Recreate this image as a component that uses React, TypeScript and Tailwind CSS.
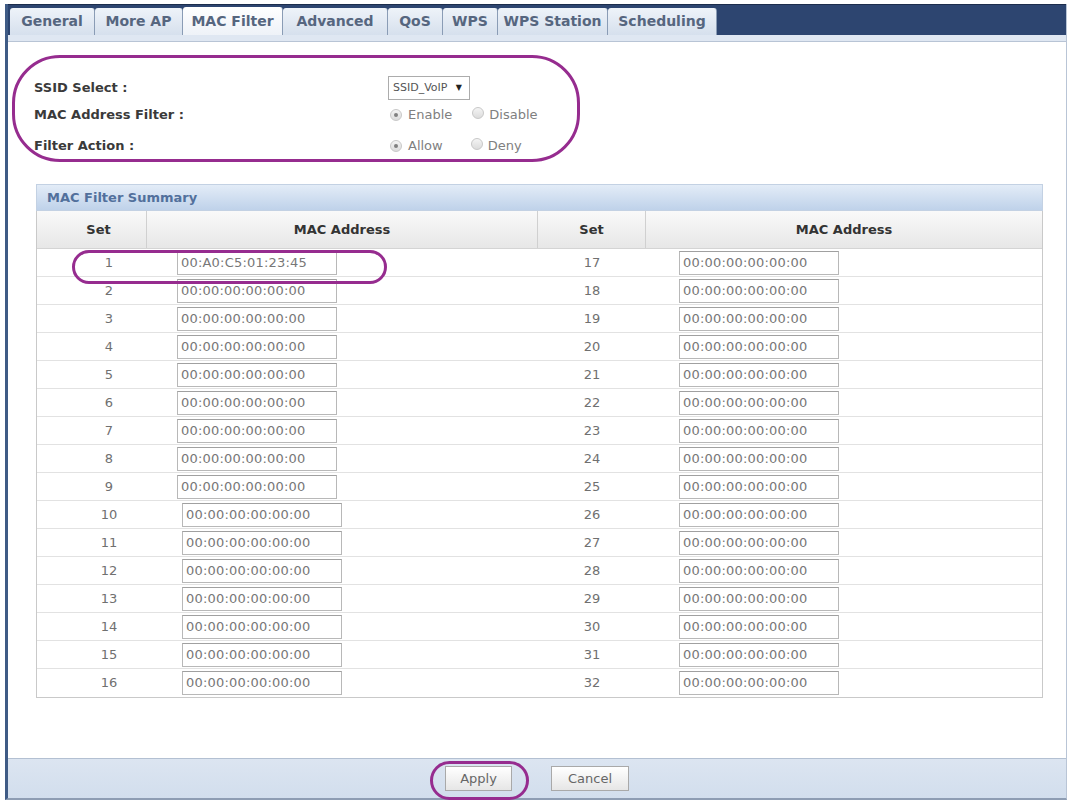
import React from "react";

const tabs = [
  { label: "General", w: 85 },
  { label: "More AP", w: 88 },
  { label: "MAC Filter", w: 100, active: true },
  { label: "Advanced", w: 105 },
  { label: "QoS", w: 55 },
  { label: "WPS", w: 55 },
  { label: "WPS Station", w: 110 },
  { label: "Scheduling", w: 109 },
];

function Radio({ checked }: { checked?: boolean }) {
  return (
    <span className="inline-flex w-[12px] h-[12px] rounded-full border border-[#c8c8c8] bg-gradient-to-b from-[#f4f4f4] to-[#dcdcdc] items-center justify-center">
      {checked && <span className="w-[4px] h-[4px] rounded-full bg-[#808080]" />}
    </span>
  );
}

function MacInput({ value }: { value: string }) {
  return (
    <div className="w-[160px] h-[24px] border border-[#b8b8b8] border-t-[#a0a0a0] bg-white flex items-center pl-[3px] text-[13px] tracking-[0.2px] text-[#777]">
      {value}
    </div>
  );
}

export default function App() {
  const rows = Array.from({ length: 16 }, (_, i) => i + 1);
  return (
    <div
      className="relative w-[1070px] h-[803px] bg-white pt-[4px] pl-[5px] pr-[3px] pb-[3px] overflow-hidden"
      style={{ fontFamily: '"DejaVu Sans", "Liberation Sans", sans-serif' }}
    >
      <div className="h-full flex flex-col border-l-[3px] border-l-[#3f5b85] border-r border-r-[#b9c5d6] border-b-2 border-b-[#8e9db3]">
        {/* tab bar */}
        <div className="h-[31px] shrink-0 bg-[#2d4570] border-t border-t-[#1c2d4c] flex items-end pl-[2px]">
          {tabs.map((t) => (
            <div
              key={t.label}
              style={{ width: t.w }}
              className={
                t.active
                  ? "h-[28px] rounded-t-[3px] border-r border-r-[#8a9cb5] bg-gradient-to-b from-[#ffffff] to-[#eef2f8] flex items-center justify-center text-[14px] font-bold text-[#56667f]"
                  : "h-[27px] rounded-t-[3px] border-r border-r-[#8a9cb5] bg-gradient-to-b from-[#eef3f9] to-[#d6e0ed] flex items-center justify-center text-[14px] font-bold text-[#56667f]"
              }
            >
              {t.label}
            </div>
          ))}
        </div>
        <div className="h-[7px] shrink-0 bg-[#dfe7f2] border-b border-b-[#b8c4d5]" />

        {/* content */}
        <div className="flex-1 flex flex-col">
          <div className="pt-[34px] pl-[26px] text-[13px]">
            <div className="h-[24px] flex items-center">
              <div className="w-[354px] font-bold text-[#3a3a3a]">SSID Select :</div>
              <div className="w-[82px] h-[24px] border border-[#acacac] bg-white flex items-center justify-between pl-[4px] pr-[7px] text-[11px] text-[#555]">
                <span>SSID_VoIP</span>
                <span className="text-[8px] text-[#222]">▼</span>
              </div>
            </div>
            <div className="h-[24px] mt-[3px] flex items-center">
              <div className="w-[356px] font-bold text-[#3a3a3a]">MAC Address Filter :</div>
              <Radio checked />
              <span className="ml-[6px] text-[#808080]">Enable</span>
              <span className="ml-[20px]"><Radio /></span>
              <span className="ml-[5px] text-[#808080]">Disable</span>
            </div>
            <div className="h-[24px] mt-[7px] flex items-center">
              <div className="w-[356px] font-bold text-[#3a3a3a]">Filter Action :</div>
              <Radio checked />
              <span className="ml-[6px] text-[#808080]">Allow</span>
              <span className="ml-[28px]"><Radio /></span>
              <span className="ml-[5px] text-[#808080]">Deny</span>
            </div>
          </div>

          {/* panel */}
          <div className="mt-[26px] ml-[28px] w-[1007px]">
            <div className="h-[27px] bg-gradient-to-b from-[#e3ecf7] to-[#bfd2ea] border border-[#c3d1e3] flex items-center pl-[10px] text-[13px] font-bold text-[#52709c]">
              MAC Filter Summary
            </div>
            <div className="border-x border-b border-[#c9c9c9]">
              <div className="h-[38px] grid grid-cols-[110px_391px_108px_396px] bg-gradient-to-b from-[#f9f9f9] to-[#e7e7e7] border-b border-[#d4d4d4] text-[13px] font-bold text-[#333]">
                <div className="flex items-center justify-center pl-[14px] border-r border-[#d0d0d0]">Set</div>
                <div className="flex items-center justify-center border-r border-[#d0d0d0]">MAC Address</div>
                <div className="flex items-center justify-center border-r border-[#d0d0d0]">Set</div>
                <div className="flex items-center justify-center">MAC Address</div>
              </div>
              {rows.map((n) => (
                <div
                  key={n}
                  className="h-[28px] grid grid-cols-[110px_391px_108px_396px] border-b border-[#e2e2e2] last:border-b-0 text-[13px] text-[#707070]"
                >
                  <div className="flex items-center justify-center pl-[34px]">{n}</div>
                  <div className="flex items-center">
                    <div className={n >= 10 ? "ml-[35px]" : "ml-[30px]"}>
                      <MacInput value={n === 1 ? "00:A0:C5:01:23:45" : "00:00:00:00:00:00"} />
                    </div>
                  </div>
                  <div className="flex items-center justify-center">{n + 16}</div>
                  <div className="flex items-center">
                    <div className="ml-[33px]">
                      <MacInput value="00:00:00:00:00:00" />
                    </div>
                  </div>
                </div>
              ))}
            </div>
          </div>
        </div>

        {/* bottom bar */}
        <div className="h-[40px] shrink-0 bg-gradient-to-b from-[#dce5f1] to-[#d2deed] border-t border-t-[#b3c0d2] flex items-center justify-center gap-[39px]">
          <button className="w-[67px] h-[25px] border border-[#a9a9a9] bg-gradient-to-b from-[#ffffff] to-[#e6e6e6] text-[13px] text-[#666]">
            Apply
          </button>
          <button className="w-[78px] h-[25px] border border-[#a9a9a9] bg-gradient-to-b from-[#ffffff] to-[#e6e6e6] text-[13px] text-[#666]">
            Cancel
          </button>
        </div>
      </div>

      {/* purple annotation rings */}
      <div className="absolute left-[12px] top-[55px] w-[568px] h-[107px] rounded-[48px] border-[3px] border-[#962c8f] pointer-events-none" />
      <div className="absolute left-[72px] top-[250px] w-[315px] h-[34px] rounded-full border-[3px] border-[#962c8f] pointer-events-none" />
      <div className="absolute left-[430px] top-[761px] w-[99px] h-[39px] rounded-full border-[3px] border-[#962c8f] pointer-events-none" />
    </div>
  );
}
